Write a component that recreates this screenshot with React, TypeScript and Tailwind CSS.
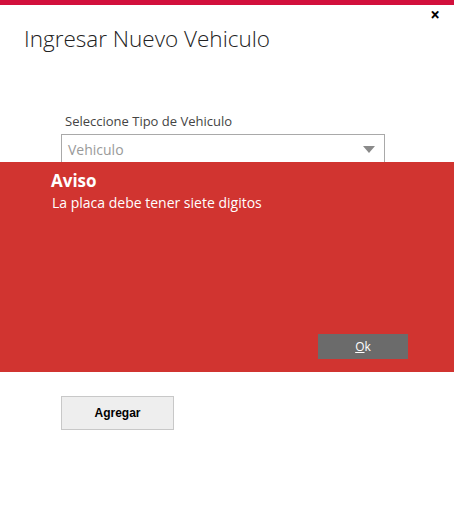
import React from "react";

export default function App() {
  const font = { fontFamily: '"Open Sans", "Noto Sans", sans-serif' };
  return (
    <div className="relative w-[454px] h-[532px] bg-white overflow-hidden" style={font}>
      <div className="h-[5px] bg-[#d2103c]" />
      <button className="absolute right-[14px] top-[6px] text-[17px] leading-none text-black font-bold">×</button>
      <div className="pl-[24px] pt-[19px] text-[22.5px] font-light text-[#222] leading-[30px]">
        Ingresar Nuevo Vehiculo
      </div>
      <div className="pl-[65px] pt-[58px] text-[13px] text-[#444] leading-[18px]">
        Seleccione Tipo de Vehiculo
      </div>
      <div className="ml-[61px] mt-[4px] w-[324px] h-[40px] border border-[#a9a9a9] flex items-start pt-[6px] pl-[6px] pr-[8px] justify-between">
        <span className="text-[14px] text-[#9a9a9a] leading-[18px]">Vehiculo</span>
        <svg width="12" height="7" viewBox="0 0 12 7" className="mt-[5px] mr-[1px]">
          <path d="M0 0 L12 0 L6 7 Z" fill="#8a8a8a" />
        </svg>
      </div>
      <div className="absolute left-0 top-[162px] w-[454px] h-[210px] bg-[#d13430] flex flex-col">
        <div className="pl-[51px] pt-[8px] text-[17px] font-bold text-white leading-[22px]">Aviso</div>
        <div className="pl-[52px] pt-[2px] text-[14px] text-white leading-[18px]">La placa debe tener siete digitos</div>
        <div className="flex justify-end pr-[46px] mt-auto mb-[13px]">
          <button className="w-[90px] h-[25px] bg-[#6b6b6b] text-white text-[12px] flex items-center justify-center">
            <span><span className="underline">O</span>k</span>
          </button>
        </div>
      </div>
      <div className="ml-[61px] mt-[222px]">
        <button
          className="w-[113px] h-[34px] bg-[#eeeeee] border border-[#c8c8c8] text-[12px] font-bold text-black"
          style={{ fontFamily: '"Liberation Sans", Arial, sans-serif' }}
        >
          Agregar
        </button>
      </div>
    </div>
  );
}
